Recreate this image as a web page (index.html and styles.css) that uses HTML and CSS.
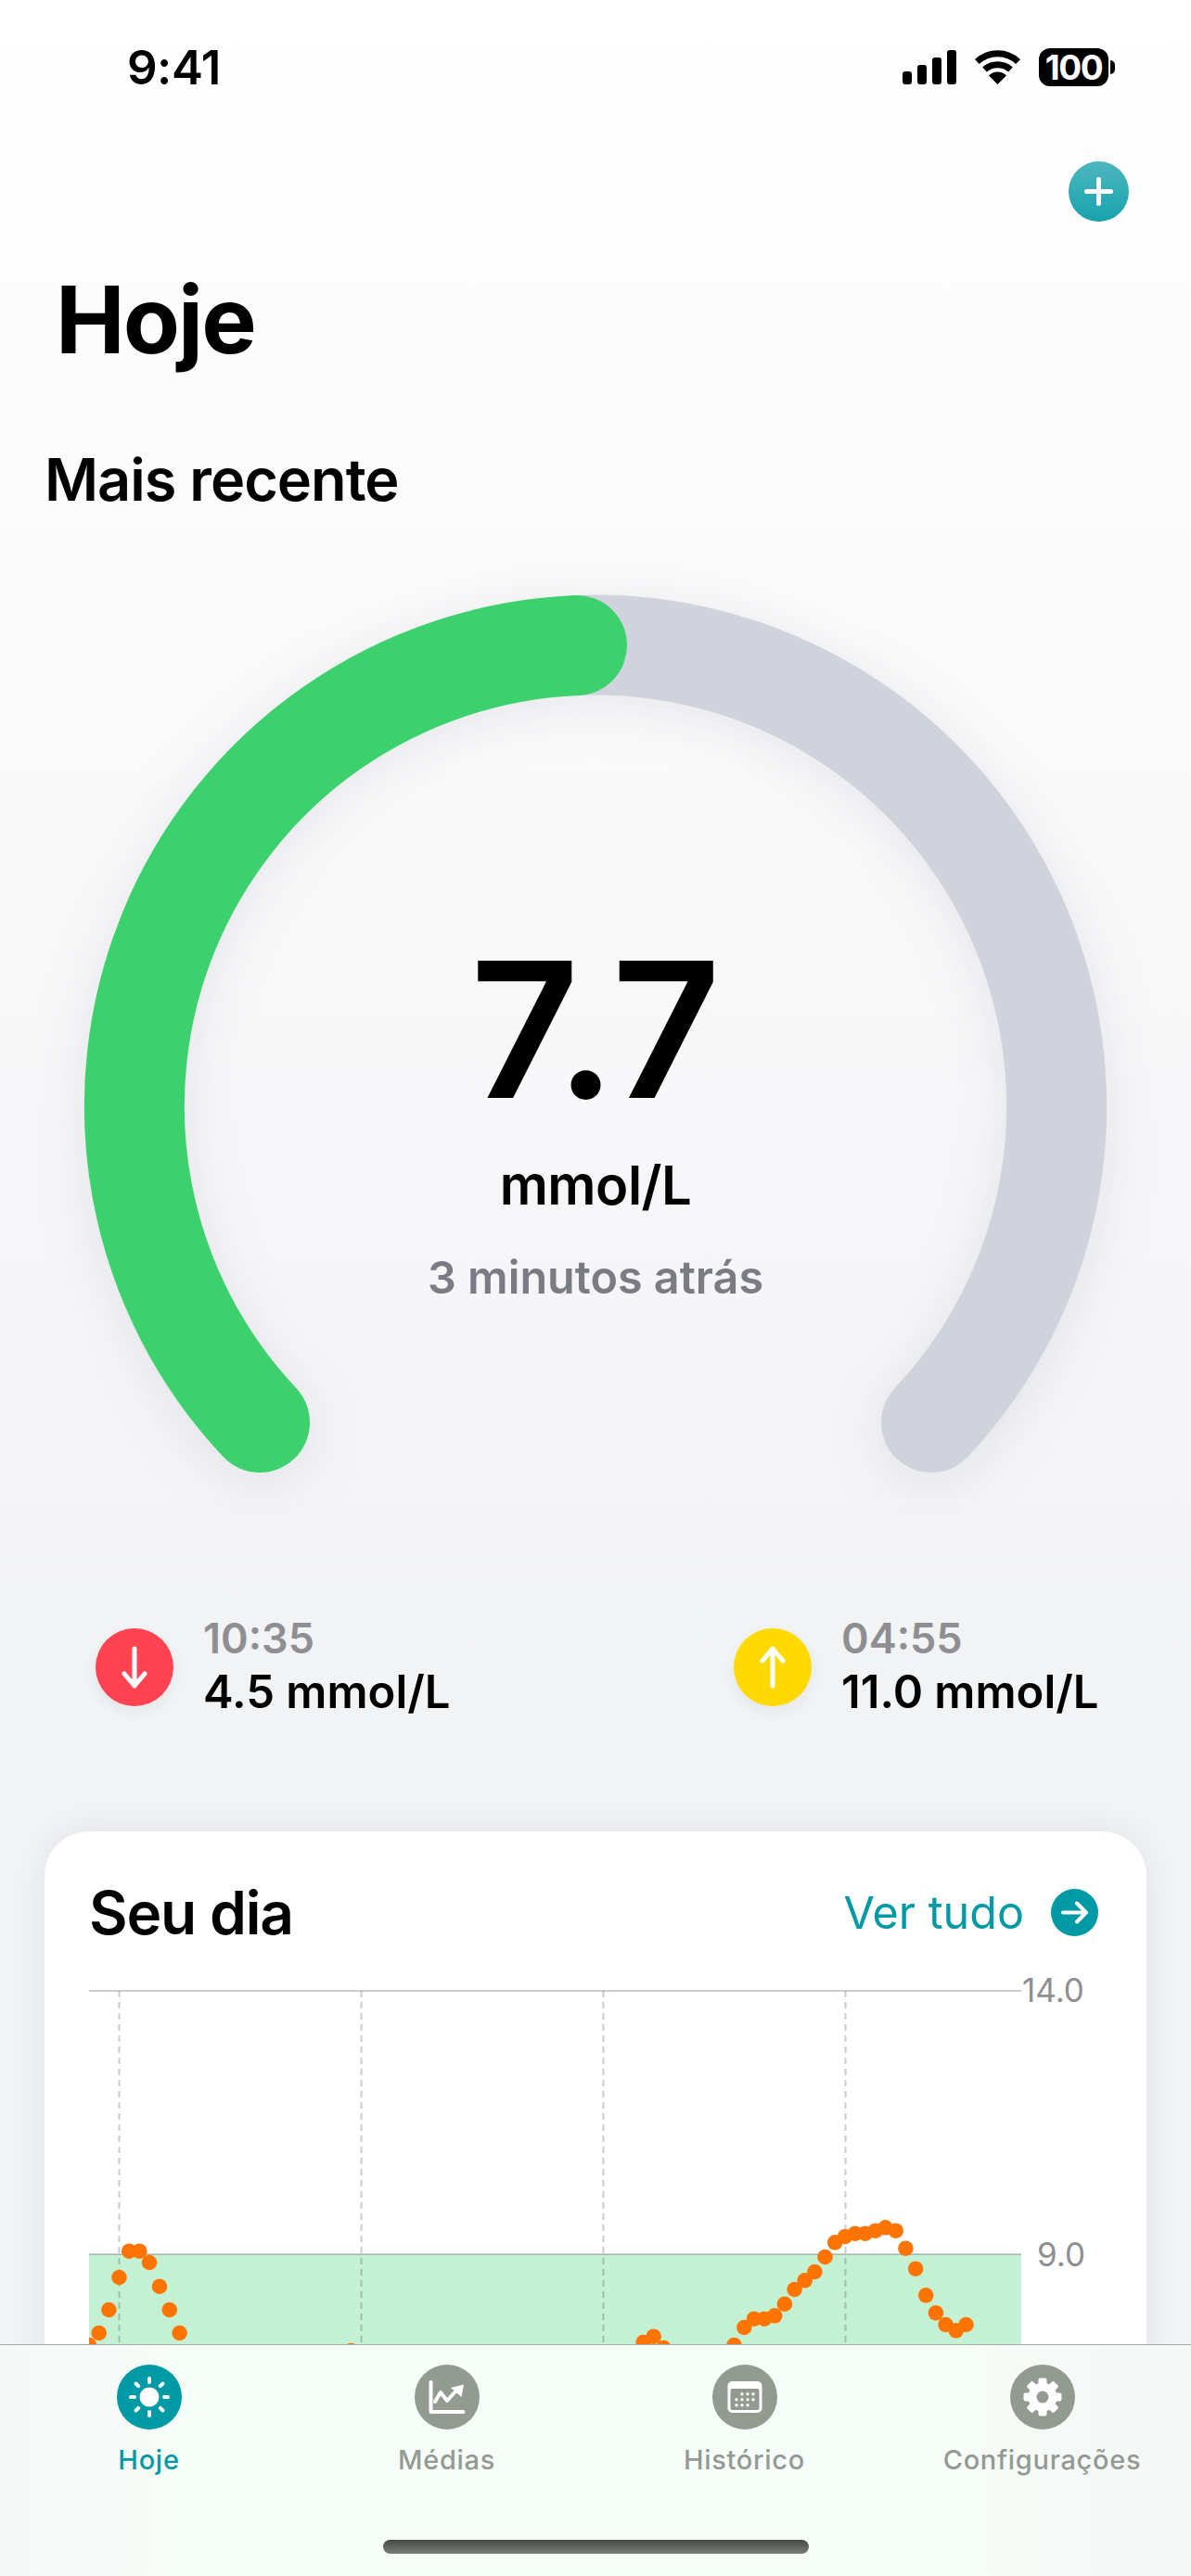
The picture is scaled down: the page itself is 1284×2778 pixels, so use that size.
FILE: index.html
```html
<!DOCTYPE html>
<html lang="pt">
<head>
    <meta charset="UTF-8">
    <meta name="viewport" content="width=device-width, initial-scale=1.0">
    <title>Hoje</title>
    <link rel="stylesheet" href="styles.css">
</head>
<body>
    <div class="screen">
        <div class="status-bar">
            <span class="clock">9:41</span>
            <div class="status-icons">
                <svg class="signal" width="58" height="37" viewBox="0 0 58 37">
                    <rect x="0" y="23" width="10" height="14" rx="3"/>
                    <rect x="16" y="16" width="10" height="21" rx="3"/>
                    <rect x="32" y="8" width="10" height="29" rx="3"/>
                    <rect x="48" y="0" width="10" height="37" rx="3"/>
                </svg>
                <svg class="wifi" width="51" height="37" viewBox="0 0 51 37">
                    <path class="wifi-arc" d="M3.4 12.5 A32 32 0 0 1 47.6 12.5"/>
                    <path class="wifi-arc" d="M11.5 21 A21 21 0 0 1 39.5 21"/>
                    <path class="wifi-tip" d="M25.5 37 L16 27.5 A13.5 13.5 0 0 1 35 27.5 Z"/>
                </svg>
                <div class="battery">
                    <span class="battery-level">100</span>
                    <span class="battery-cap"></span>
                </div>
            </div>
        </div>

        <div class="add-row">
            <div class="add-btn">
                <svg width="31" height="31" viewBox="0 0 31 31">
                    <path class="white-line" d="M15.5 2.5 V28.5 M2.5 15.5 H28.5"/>
                </svg>
            </div>
        </div>

        <h1>Hoje</h1>
        <h2>Mais recente</h2>

        <div class="gauge">
            <svg class="gauge-svg" width="1284" height="1000" viewBox="0 600 1284 1000">
                <path class="gauge-rest" d="M622 696 A497.5 497.5 0 0 1 1004 1534"/>
                <path class="gauge-value" d="M280 1534 A497.5 497.5 0 0 1 622 696"/>
            </svg>
            <div class="gauge-text">
                <div class="reading">7.7</div>
                <div class="unit">mmol/L</div>
                <div class="ago">3 minutos atrás</div>
            </div>
        </div>

        <div class="extremes">
            <div class="extreme">
                <div class="extreme-icon low">
                    <svg width="40" height="46" viewBox="0 0 40 46">
                        <path class="white-line" d="M20 3 V43 M9 30 L20 43 L31 30"/>
                    </svg>
                </div>
                <div>
                    <div class="extreme-time">10:35</div>
                    <div class="extreme-value">4.5 mmol/L</div>
                </div>
            </div>
            <div class="extreme">
                <div class="extreme-icon high">
                    <svg width="40" height="46" viewBox="0 0 40 46">
                        <path class="white-line" d="M20 43 V3 M9 16 L20 3 L31 16"/>
                    </svg>
                </div>
                <div>
                    <div class="extreme-time">04:55</div>
                    <div class="extreme-value">11.0 mmol/L</div>
                </div>
            </div>
        </div>

        <div class="card">
            <div class="card-header">
                <span class="card-title">Seu dia</span>
                <div class="see-all">
                    <span>Ver tudo</span>
                    <div class="see-all-icon">
                        <svg width="31" height="25" viewBox="0 0 31 25">
                            <path class="white-line thin" d="M3 12.5 H28 M18 2.5 L28 12.5 L18 22.5"/>
                        </svg>
                    </div>
                </div>
            </div>

            <svg class="chart" width="1074" height="420" viewBox="96 2130 1074 420">
                <defs>
                    <clipPath id="plotArea"><rect x="96" y="2130" width="1005" height="420"/></clipPath>
                </defs>
                <rect class="range" x="96" y="2431" width="1005" height="120"/>
                <path class="grid" d="M96 2147 H1101 M96 2431 H1101"/>
                <path class="grid-v" d="M128.5 2147 V2550 M389.5 2147 V2550 M650.5 2147 V2550 M911.5 2147 V2550"/>
                <text class="axis-label" x="1102" y="2159">14.0</text>
                <text class="axis-label" x="1118" y="2444">9.0</text>
                <g class="dots" clip-path="url(#plotArea)">
                    <circle cx="96" cy="2529" r="8.3"/>
                    <circle cx="106.7" cy="2516" r="8.3"/>
                    <circle cx="117.4" cy="2491" r="8.3"/>
                    <circle cx="128.5" cy="2456" r="8.3"/>
                    <circle cx="139.2" cy="2427.7" r="8.3"/>
                    <circle cx="150.3" cy="2427.7" r="8.3"/>
                    <circle cx="161" cy="2440" r="8.3"/>
                    <circle cx="172" cy="2465.7" r="8.3"/>
                    <circle cx="182.8" cy="2491" r="8.3"/>
                    <circle cx="193.6" cy="2516" r="8.3"/>
                    <circle cx="378.4" cy="2535" r="8.3"/>
                    <circle cx="693.6" cy="2526" r="8.3"/>
                    <circle cx="704.7" cy="2519.7" r="8.3"/>
                    <circle cx="715.4" cy="2532" r="8.3"/>
                    <circle cx="791.5" cy="2529" r="8.3"/>
                    <circle cx="802.3" cy="2510" r="8.3"/>
                    <circle cx="813" cy="2500.7" r="8.3"/>
                    <circle cx="824" cy="2500.7" r="8.3"/>
                    <circle cx="835.2" cy="2497.3" r="8.3"/>
                    <circle cx="845.9" cy="2484.7" r="8.3"/>
                    <circle cx="856.6" cy="2469" r="8.3"/>
                    <circle cx="867.7" cy="2459.3" r="8.3"/>
                    <circle cx="878.4" cy="2450" r="8.3"/>
                    <circle cx="889.5" cy="2434" r="8.3"/>
                    <circle cx="900.2" cy="2418.3" r="8.3"/>
                    <circle cx="911" cy="2412" r="8.3"/>
                    <circle cx="922" cy="2408.7" r="8.3"/>
                    <circle cx="932.8" cy="2408.7" r="8.3"/>
                    <circle cx="943.9" cy="2405.7" r="8.3"/>
                    <circle cx="954.6" cy="2402.3" r="8.3"/>
                    <circle cx="965.7" cy="2405.7" r="8.3"/>
                    <circle cx="976.4" cy="2424.7" r="8.3"/>
                    <circle cx="987.1" cy="2446.7" r="8.3"/>
                    <circle cx="998.2" cy="2475.3" r="8.3"/>
                    <circle cx="1008.9" cy="2494.3" r="8.3"/>
                    <circle cx="1019.6" cy="2507" r="8.3"/>
                    <circle cx="1030.7" cy="2513.3" r="8.3"/>
                    <circle cx="1041.5" cy="2507" r="8.3"/>
                </g>
            </svg>
        </div>

        <nav class="tab-bar">
            <div class="tab active">
                <div class="tab-icon">
                    <svg width="50" height="50" viewBox="-25 -25 50 50">
                        <circle class="white-fill" r="10.5"/>
                        <path class="white-line thin" d="M0 -20 V-16 M0 16 V20 M-20 0 H-16 M16 0 H20 M-14.5 -14.5 L-11.8 -11.8 M14.5 -14.5 L11.8 -11.8 M-14.5 14.5 L-11.8 11.8 M14.5 14.5 L11.8 11.8"/>
                    </svg>
                </div>
                <span class="tab-label">Hoje</span>
            </div>
            <div class="tab">
                <div class="tab-icon">
                    <svg width="50" height="50" viewBox="-25 -25 50 50">
                        <path class="white-line thin" d="M-17.5 -16 V16 H17.5"/>
                        <path class="white-line thin" d="M-13 5 L-7 -5 L0 4 L9 -6"/>
                        <path class="white-fill" d="M18 -13.5 L15.5 0 L4 -10 Z"/>
                    </svg>
                </div>
                <span class="tab-label">Médias</span>
            </div>
            <div class="tab">
                <div class="tab-icon">
                    <svg width="50" height="50" viewBox="-25 -25 50 50">
                        <rect class="white-fill" x="-18.5" y="-17" width="37" height="34" rx="5"/>
                        <rect class="icon-hole" x="-15.5" y="-9" width="31" height="23" rx="2"/>
                        <g class="white-fill">
                            <circle cx="-3" cy="-3.3" r="1.7"/><circle cx="3" cy="-3.3" r="1.7"/><circle cx="9" cy="-3.3" r="1.7"/>
                            <circle cx="-9" cy="2.7" r="1.7"/><circle cx="-3" cy="2.7" r="1.7"/><circle cx="3" cy="2.7" r="1.7"/><circle cx="9" cy="2.7" r="1.7"/>
                            <circle cx="-9" cy="8.7" r="1.7"/><circle cx="-3" cy="8.7" r="1.7"/><circle cx="3" cy="8.7" r="1.7"/>
                        </g>
                    </svg>
                </div>
                <span class="tab-label">Histórico</span>
            </div>
            <div class="tab">
                <div class="tab-icon">
                    <svg width="50" height="50" viewBox="-25 -25 50 50">
                        <circle class="white-fill" r="15.5"/>
                        <g class="white-fill">
                            <rect x="-4.5" y="-20.5" width="9" height="41" rx="2"/>
                            <rect x="-4.5" y="-20.5" width="9" height="41" rx="2" transform="rotate(45)"/>
                            <rect x="-4.5" y="-20.5" width="9" height="41" rx="2" transform="rotate(90)"/>
                            <rect x="-4.5" y="-20.5" width="9" height="41" rx="2" transform="rotate(135)"/>
                        </g>
                        <circle class="icon-hole" r="6.5"/>
                    </svg>
                </div>
                <span class="tab-label">Configurações</span>
            </div>
            <div class="home-indicator"></div>
        </nav>
    </div>
</body>
</html>
```

FILE: styles.css
```css
body { margin: 0; padding: 0; background-color: #f2f3f6; font-family: Inter, "Liberation Sans", sans-serif; color: #000; }
.screen { position: relative; width: 1284px; height: 2778px; overflow: hidden; background: linear-gradient(180deg, #fff 0, #fbfbfc 600px, #f2f3f5 1800px); }

/* status bar */
.status-bar { display: flex; justify-content: space-between; align-items: center; height: 41px; padding: 52px 89px 0 137px; }
.clock { font-size: 51px; font-weight: 600; letter-spacing: -0.5px; }
.status-icons { display: flex; align-items: center; gap: 19px; }
.signal { display: block; fill: #000; }
.wifi { display: block; }
.wifi-arc { fill: none; stroke: #000; stroke-width: 7; }
.wifi-tip { fill: #000; }
.battery { position: relative; display: flex; align-items: center; justify-content: center; width: 75px; height: 41px; border-radius: 12px; background-color: #000; }
.battery-level { color: #fff; font-size: 37px; font-weight: 700; letter-spacing: -1.5px; }
.battery-cap { position: absolute; left: 77px; top: 13px; width: 5px; height: 15px; border-radius: 0 8px 8px 0; background-color: #000; }

.add-row { display: flex; justify-content: flex-end; margin-top: 81px; padding-right: 67px; }
.add-btn { display: flex; align-items: center; justify-content: center; width: 65px; height: 65px; border-radius: 50%; background: linear-gradient(180deg, #4db6bd, #17a3ae); }

.white-line { fill: none; stroke: #fff; stroke-width: 5; stroke-linecap: round; stroke-linejoin: round; }
.white-line.thin { stroke-width: 4; }
.white-fill { fill: #fff; }

h1 { margin: 56px 0 0 0; padding-left: 60px; font-size: 100px; line-height: 100px; font-weight: 700; letter-spacing: -2px; }
h2 { margin: 90px 0 0 0; padding-left: 48px; font-size: 63px; line-height: 64px; font-weight: 600; letter-spacing: -1px; }

/* gauge */
.gauge { position: relative; height: 1000px; margin-top: 51px; }
.gauge-svg { display: block; overflow: visible; filter: drop-shadow(0 8px 30px rgba(60, 60, 90, 0.1)); }
.gauge-rest, .gauge-value { fill: none; stroke-width: 108; stroke-linecap: round; }
.gauge-rest { stroke: #d0d2dc; }
.gauge-value { stroke: #3dd16d; }
.gauge-text { position: absolute; left: 0; right: 0; top: 404px; display: flex; flex-direction: column; align-items: center; }
.reading { margin: -19px 0; font-size: 204px; line-height: 250px; font-weight: 600; }
.unit { margin-top: 32px; font-size: 58px; line-height: 60px; font-weight: 600; letter-spacing: -0.5px; }
.ago { margin-top: 40px; font-size: 48.5px; line-height: 60px; font-weight: 600; color: #7b7b86; }

/* lowest and highest */
.extremes { display: grid; grid-template-columns: 688px 1fr; margin-top: 142px; padding-left: 103px; }
.extreme { display: flex; align-items: center; gap: 32px; }
.extreme-icon { display: flex; align-items: center; justify-content: center; width: 84px; height: 84px; border-radius: 50%; box-shadow: 0 6px 18px rgba(0, 0, 0, 0.06); }
.extreme-icon.low { background-color: #ff4350; }
.extreme-icon.high { background-color: #ffd900; }
.extreme-time { font-size: 45px; line-height: 50px; font-weight: 600; color: #8e8e93; }
.extreme-value { margin-top: 4px; font-size: 49px; line-height: 58px; font-weight: 600; }

/* card */
.card { margin: 121px 48px 0 48px; padding: 62px 52px 0 48px; height: 900px; background-color: #fff; border-radius: 48px; box-shadow: 0 0 40px rgba(30, 30, 60, 0.07); }
.card-header { display: flex; justify-content: space-between; align-items: center; height: 51px; }
.card-title { font-size: 64px; font-weight: 600; letter-spacing: -1.2px; }
.see-all { display: flex; align-items: center; gap: 29px; font-size: 48.5px; color: #0099a6; }
.see-all-icon { display: flex; align-items: center; justify-content: center; width: 51px; height: 51px; border-radius: 50%; background-color: #0099a6; }
.chart { display: block; margin-top: 42px; }
.range { fill: #c4f1d4; }
.grid { fill: none; stroke: rgba(0, 0, 0, 0.2); stroke-width: 2; }
.grid-v { fill: none; stroke: rgba(0, 0, 0, 0.2); stroke-width: 2; stroke-dasharray: 7 5; }
.axis-label { font-size: 35px; fill: #8e8e93; }
.dots { fill: #ff7300; }

/* tab bar */
.tab-bar { position: absolute; left: 0; right: 0; bottom: 0; height: 249px; display: grid; grid-template-columns: repeat(4, 1fr); align-items: start; border-top: 1px solid rgba(0, 0, 0, 0.33); background: linear-gradient(90deg, #f6f8f8 0, #f6fdf8 18%, #f6fdf8 78%, #f5f6f6 100%); }
.tab { display: flex; flex-direction: column; align-items: center; padding-top: 21px; }
.tab-icon { display: flex; align-items: center; justify-content: center; width: 70px; height: 70px; border-radius: 50%; background-color: #939a90; }
.tab-label { margin-top: 15px; font-size: 29px; line-height: 36px; font-weight: 500; letter-spacing: 0.7px; color: #939a93; }
.icon-hole { fill: #939a90; }
.tab.active .tab-icon { background-color: #0099a6; }
.tab.active .tab-label { color: #0099a6; }
.home-indicator { position: absolute; left: 413px; bottom: 24px; width: 459px; height: 15px; border-radius: 8px; background: linear-gradient(180deg, #464846, #7b7d7b); }
```
